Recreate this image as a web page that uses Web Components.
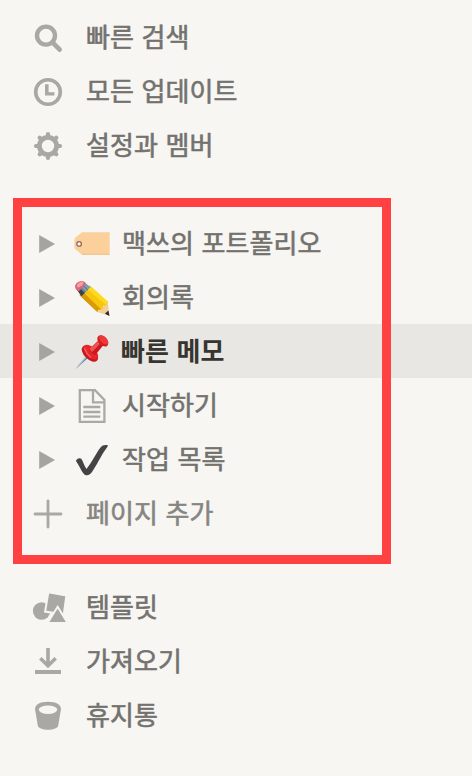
<!DOCTYPE html>
<html lang="ko">
<head>
<meta charset="utf-8">
<title>사이드바</title>
<style>
    html, body { margin: 0; height: 100%; }
    body {
        background: #f7f6f3;
        font-family: "Noto Sans CJK KR", sans-serif;
        overflow: hidden;
    }
</style>
</head>
<body>
<side-bar>
    <side-group>
        <side-item icon="search">빠른 검색</side-item>
        <side-item icon="clock">모든 업데이트</side-item>
        <side-item icon="gear">설정과 멤버</side-item>
    </side-group>
    <side-group framed>
        <side-item icon="arrow" emoji="tag">맥쓰의 포트폴리오</side-item>
        <side-item icon="arrow" emoji="pencil">회의록</side-item>
        <side-item icon="arrow" emoji="pin" active>빠른 메모</side-item>
        <side-item icon="arrow" emoji="doc">시작하기</side-item>
        <side-item icon="arrow" emoji="check">작업 목록</side-item>
        <side-item icon="plus" muted>페이지 추가</side-item>
    </side-group>
    <side-group>
        <side-item icon="shapes">템플릿</side-item>
        <side-item icon="download">가져오기</side-item>
        <side-item icon="trash">휴지통</side-item>
    </side-group>
</side-bar>

<script>
// Every icon is drawn on a 36x36 grid
const ICONS = {
    search: `<g fill="none" stroke="#a9a8a4" stroke-linecap="round">
        <circle cx="16" cy="16.6" r="9" stroke-width="4.4"/><path d="M23 23.8l6.700 6.900" stroke-width="4.600"/></g>`,
    clock: `<circle cx="18" cy="19" r="12.300" fill="none" stroke="#a9a8a4" stroke-width="3.600"/>
        <path d="M15 11.300h3.600v7.900h5.800v3.400H15z" fill="#a9a8a4"/>`,
    gear: `<g stroke="#a9a8a4" fill="none"><circle cx="18" cy="19" r="8.600" stroke-width="4.800"/>
        <path d="M18 10V7M18 28V31M9 19H6M27 19H30M11.500 12.500l-1.800-1.800M24.500 25.500l1.800 1.800M11.500 25.500l-1.800 1.800M24.500 12.500l1.800-1.800" stroke-width="4.200" stroke-linecap="round"/></g>`,
    arrow: `<path d="M9.200 10l15.800 9-15.800 9z" fill="#a5a4a0"/>`,
    plus: `<path d="M18 6v26M5 19h26" stroke="#a9a8a4" stroke-width="2.800" stroke-linecap="round"/>`,
    shapes: `<circle cx="11.600" cy="22" r="8.700" fill="#a9a8a4"/>
        <path d="M18.400 3.200l18 3.400-2.600 18.800-18.700-2.800z" fill="#a9a8a4" stroke="#f7f6f3" stroke-width="2"/>
        <path d="M27.600 17.800l10 16.200H17.600z" fill="#a9a8a4" stroke="#f7f6f3" stroke-width="2"/>`,
    download: `<path d="M18 5v17M10.300 15.200l7.700 7.500 7.700-7.500" fill="none" stroke="#a9a8a4" stroke-width="3.600"/>
        <path d="M5 27h26v4H5z" fill="#a9a8a4"/>`,
    trash: `<path d="M5 12C5 7.500 10 4.700 18 4.700S31 7.500 31 12l-2.800 16.500c-.5 2.500-4.500 4.300-10.200 4.300S8.300 31 7.800 28.500z" fill="#a9a8a4"/>
        <ellipse cx="18" cy="12.700" rx="9.200" ry="4.200" fill="#f7f6f3"/>`,
    tag: `<path d="M8 7.300H35.200q.5 0 .5.500v21.400q0 .5-.5.500H8L1.600 24.500Q.4 23.500 .4 22v-7q0-1.500 1.200-2.500z" fill="#fbd09a"/>
        <path d="M8 29.300h27.500" stroke="#edbd83" stroke-width=".8"/>
        <circle cx="5.100" cy="18.900" r="2.300" fill="#fff" stroke="#936552" stroke-width="1.300"/>`,
    pencil: `<path d="M23.300 33L33.700 22.700 35.300 36.700z" fill="#f2cf98"/>
        <path d="M31 34.800l3.400-3.300 1.100 5.400z" fill="#292625"/>
        <path d="M5.500 16.300L16 6.700l17.800 16-1.300 3.600-3.500.5-.8 3.700-3.700.2-1.200 2.300z" fill="#f8c60c"/>
        <path d="M5.500 16.300l3.500-3.200 18 17.300-2.500.3-1.200 2.300z" fill="#d99a09"/>
        <path d="M12.500 9.800L16 6.700l17.800 16-1.300 3.600z" fill="#ffd91c"/>
        <path d="M3.300 11.200l7.600-7.500 5.700 4.400-9.200 9.200z" fill="#829cb1"/>
        <path d="M3.300 11.200l2.500-2.400 5 5.300-3.400 3.200z" fill="#3c424b"/>
        <path d="M6.500 8l5.100 5.300M8.500 6l5.300 5.100" stroke="#526b82"/>
        <path d="M1 7.500C1 4.500 4.500 2 7.700 2c1.800 0 3.200 1 4.500 2.500l-7.400 8C2.700 11.500 1 9.500 1 7.500z" fill="#dc6677"/>
        <ellipse cx="6" cy="5.500" rx="3.800" ry="1.900" transform="rotate(-38 6 5.500)" fill="#f1a0a8"/>`,
    pin: `<path d="M1.700 36L12.500 22.500l2 2z" fill="#687d8d"/>
        <path d="M4.500 32.300l8.300-9" stroke="#a9cee0" stroke-width="1.200"/>
        <ellipse cx="15.900" cy="20.600" rx="10" ry="5.600" transform="rotate(45 15.900 20.600)" fill="#c61922"/>
        <ellipse cx="16.900" cy="19" rx="9.200" ry="4.700" transform="rotate(45 16.900 19)" fill="#e7252a"/>
        <path d="M15 16.200L24.500 7.500l4.800 4.800-8 9.700q-4.500-1.500-6.300-5.800z" fill="#cf1720"/>
        <path d="M15.300 15.900l9.300-8 2.200 2-8.800 9z" fill="#f0544c"/>
        <ellipse cx="28.800" cy="7.900" rx="6.600" ry="4.300" transform="rotate(46 28.800 7.900)" fill="#d51d23"/>
        <ellipse cx="29.700" cy="6.900" rx="5.600" ry="3.200" transform="rotate(46 29.700 6.900)" fill="#ed3938"/>
        <path d="M10.400 15q2 6 6.500 9.800" stroke="#ee6460" stroke-width="1.300" fill="none"/>`,
    doc: `<g fill="none" stroke="#aaa9a5" stroke-width="2.300"><path d="M5.800 3.200h15.200l9.400 9.700V34.800H5.800z"/>
        <path d="M19 3v12.300h11.400M9.300 20h17M9.300 25h17M9.300 29.700h17"/></g>`,
    check: `<path d="M2.200 19.200Q4 16.300 6.800 17.500C8.500 18.500 10 24.500 12.500 28 18 21 22.500 11.500 26.500 6.500 28.300 3.900 31 3.500 33.500 4.200 34.300 4.600 33.800 5.500 33.300 6 28.500 12 24.500 21 18.500 30.200 15.800 34.800 12 35.300 9.700 32.700 7.200 30 5.200 24.500 2.300 20.500Q1.700 19.900 2.200 19.200z" fill="#444"/>`
};

class SideBar extends HTMLElement {
    constructor() {
        super();
        this.attachShadow({ mode: 'open' });
    }

    connectedCallback() {
        this.shadowRoot.innerHTML = `
            <style>
                :host {
                    box-sizing: border-box;
                    display: flex;
                    flex-direction: column;
                    padding-top: 10px;
                    height: 100%;
                }

                ::slotted(side-group[framed]) {
                    margin: 44px 0 40px;
                }
            </style>
            <slot></slot>
        `;
    }
}

class SideGroup extends HTMLElement {
    constructor() {
        super();
        this.attachShadow({ mode: 'open' });
    }

    connectedCallback() {
        this.shadowRoot.innerHTML = `
            <style>
                :host {
                    display: flex;
                    flex-direction: column;
                    position: relative;
                }

                /* highlight box laid over the rows */
                :host([framed])::after {
                    content: '';
                    box-sizing: border-box;
                    position: absolute;
                    left: 13px;
                    top: -18px;
                    width: 378px;
                    height: 366px;
                    border: 9px solid #ff4142;
                    pointer-events: none;
                }
            </style>
            <slot></slot>
        `;
    }
}

class SideItem extends HTMLElement {
    constructor() {
        super();
        this.attachShadow({ mode: 'open' });
    }

    connectedCallback() {
        this.render();
    }

    icon(name, cls) {
        return `<svg class="${cls}" viewBox="0 0 36 36" aria-hidden="true">${ICONS[name]}</svg>`;
    }

    render() {
        const emoji = this.getAttribute('emoji');
        this.shadowRoot.innerHTML = `
            <style>
                :host {
                    display: flex;
                    align-items: center;
                    height: 54px;
                    padding-left: 30px;
                    color: #73726e;
                    font-size: 26px;
                    line-height: 52px;
                    cursor: pointer;
                }

                :host([active]) {
                    background: #e8e7e4;
                    color: #37352f;
                    font-weight: 700;
                }

                :host([muted]) {
                    color: #868581;
                }

                svg {
                    flex: none;
                    width: 36px;
                    height: 36px;
                    overflow: visible;
                }

                .emoji {
                    margin-left: 8px;
                }

                .label {
                    height: 54px;
                    margin-left: 20px;
                    white-space: nowrap;
                    letter-spacing: 0.1px;
                    -webkit-text-stroke: 0.6px currentColor;
                }

                .emoji + .label {
                    margin-left: 12px;
                }

                :host([active]) .label {
                    margin-left: 11px;
                    -webkit-text-stroke: 0;
                }
            </style>
            ${this.icon(this.getAttribute('icon'), 'lead')}
            ${emoji ? this.icon(emoji, 'emoji') : ''}
            <span class="label"><slot></slot></span>
        `;
    }
}

customElements.define('side-bar', SideBar);
customElements.define('side-group', SideGroup);
customElements.define('side-item', SideItem);
</script>
</body>
</html>
